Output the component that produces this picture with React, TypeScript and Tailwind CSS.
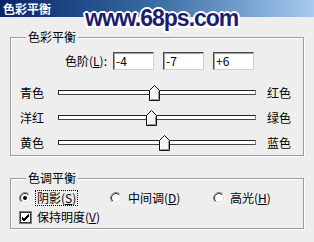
import React from "react";

const U = ({ c }: { c: string }) => <span className="underline underline-offset-[1px]">{c}</span>;

function Group({ label, className, children }: { label: string; className?: string; children: React.ReactNode }) {
  return (
    <div className={"relative border border-[#9c9c9c] shadow-[inset_1px_1px_0_#ffffff,1px_1px_0_#ffffff] " + (className ?? "")}>
      <div className="absolute left-[15px] -top-[8px] bg-[#eeeeee] px-[2px] text-[12px] leading-[14px]">{label}</div>
      {children}
    </div>
  );
}

function Thumb({ left }: { left: number }) {
  return (
    <svg className="absolute -top-[6px]" style={{ left }} width="11" height="16" viewBox="0 0 11 16">
      <polygon points="0.5,5.5 5.5,0.5 10.5,5.5 10.5,15.5 0.5,15.5" fill="#f4f4f4" stroke="#111" strokeWidth="1" />
      <polyline points="1.5,14.5 1.5,6 5.5,2" fill="none" stroke="#ffffff" strokeWidth="1" />
      <polyline points="9.5,6 9.5,14.5 1.5,14.5" fill="none" stroke="#9a9a9a" strokeWidth="1" />
    </svg>
  );
}

function SliderRow({ left, right, thumb }: { left: string; right: string; thumb: number }) {
  return (
    <div className="h-[25px] flex items-center pl-[9px]">
      <div className="w-[38px] text-[12px] leading-[14px]">{left}</div>
      <div className="relative w-[198px] h-[5px] bg-white border border-[#222] border-r-[#888] border-b-[#444]">
        <Thumb left={thumb} />
      </div>
      <div className="ml-[11px] text-[12px] leading-[14px]">{right}</div>
    </div>
  );
}

function Radio({ checked }: { checked?: boolean }) {
  return (
    <svg width="12" height="12" viewBox="0 0 12 12" className="shrink-0">
      <defs>
        <linearGradient id="ro" x1="0" y1="0" x2="1" y2="1">
          <stop offset="0.45" stopColor="#808080" />
          <stop offset="0.55" stopColor="#ffffff" />
        </linearGradient>
        <linearGradient id="ri" x1="0" y1="0" x2="1" y2="1">
          <stop offset="0.45" stopColor="#303030" />
          <stop offset="0.55" stopColor="#d8d8d8" />
        </linearGradient>
      </defs>
      <circle cx="6" cy="6" r="5.5" fill="#ffffff" stroke="url(#ro)" strokeWidth="1" />
      <circle cx="6" cy="6" r="4.5" fill="#ffffff" stroke="url(#ri)" strokeWidth="1" />
      {checked && <circle cx="6" cy="6" r="2" fill="#000" />}
    </svg>
  );
}

function Input({ v }: { v: string }) {
  return (
    <div className="w-[41px] h-[18px] bg-white border border-t-[#4a4a4a] border-l-[#4a4a4a] border-r-[#d0d0d0] border-b-[#d0d0d0] shadow-[inset_1px_1px_0_#a0a0a0] pl-[2px] text-[12px] leading-[16px]">
      {v}
    </div>
  );
}

export default function App() {
  return (
    <div className="relative w-[314px] h-[242px] overflow-hidden bg-[#eeeeee] text-black font-['Noto_Sans_CJK_SC',sans-serif]">
      <div className="h-[17px] bg-gradient-to-r from-[#0a246a] via-[#3a6ea5] to-[#a6caf0] flex items-center pl-[3px] text-white font-bold text-[12px] leading-[14px]">
        色彩平衡
      </div>
      <div className="px-[10px]">
        <Group label="色彩平衡" className="mt-[20px]">
          <div className="pt-[14px] flex items-center">
            <div className="w-[102px] pr-[6px] text-right text-[12px] leading-[14px]">
              色阶(<U c="L" />):
            </div>
            <div className="flex gap-[9px]">
              <Input v="-4" />
              <Input v="-7" />
              <Input v="+6" />
            </div>
          </div>
          <div className="mt-[10px]">
            <SliderRow left="青色" right="红色" thumb={90} />
            <SliderRow left="洋红" right="绿色" thumb={87} />
            <SliderRow left="黄色" right="蓝色" thumb={100} />
          </div>
        </Group>
        <Group label="色调平衡" className="mt-[22px]">
          <div className="pt-[11px] pl-[8px] h-[27px] flex items-center text-[12px] leading-[14px]">
            <div className="w-[91px] flex items-center">
              <Radio checked />
              <span className="ml-[4px] px-[1px] border border-dotted border-black">
                阴影(<U c="S" />)
              </span>
            </div>
            <div className="w-[103px] flex items-center">
              <Radio />
              <span className="ml-[6px]">
                中间调(<U c="D" />)
              </span>
            </div>
            <div className="flex items-center">
              <Radio />
              <span className="ml-[5px]">
                高光(<U c="H" />)
              </span>
            </div>
          </div>
          <div className="mt-[3px] mb-[3px] pl-[8px] h-[16px] flex items-center text-[12px] leading-[14px]">
            <svg width="13" height="13" viewBox="0 0 13 13" className="shrink-0">
              <rect x="0.5" y="0.5" width="12" height="12" fill="#fff" stroke="#808080" />
              <rect x="1.5" y="1.5" width="10" height="10" fill="#fff" stroke="#303030" />
              <path d="M3 6 L5 8 L10 3 M3 7 L5 9 L10 4 M3 8 L5 10 L10 5" stroke="#000" strokeWidth="1" fill="none" />
            </svg>
            <span className="ml-[5px]">
              保持明度(<U c="V" />)
            </span>
          </div>
        </Group>
      </div>
      <div className="absolute left-[85px] top-[7px] text-[23px] leading-[23px] font-bold tracking-[-1px] text-[#1f1b6e] font-['Liberation_Sans',sans-serif] [text-shadow:2px_0_0_#fff,-2px_0_0_#fff,0_2px_0_#fff,0_-2px_0_#fff,1.5px_1.5px_0_#fff,-1.5px_-1.5px_0_#fff,1.5px_-1.5px_0_#fff,-1.5px_1.5px_0_#fff]">
        www.68ps.com
      </div>
    </div>
  );
}
